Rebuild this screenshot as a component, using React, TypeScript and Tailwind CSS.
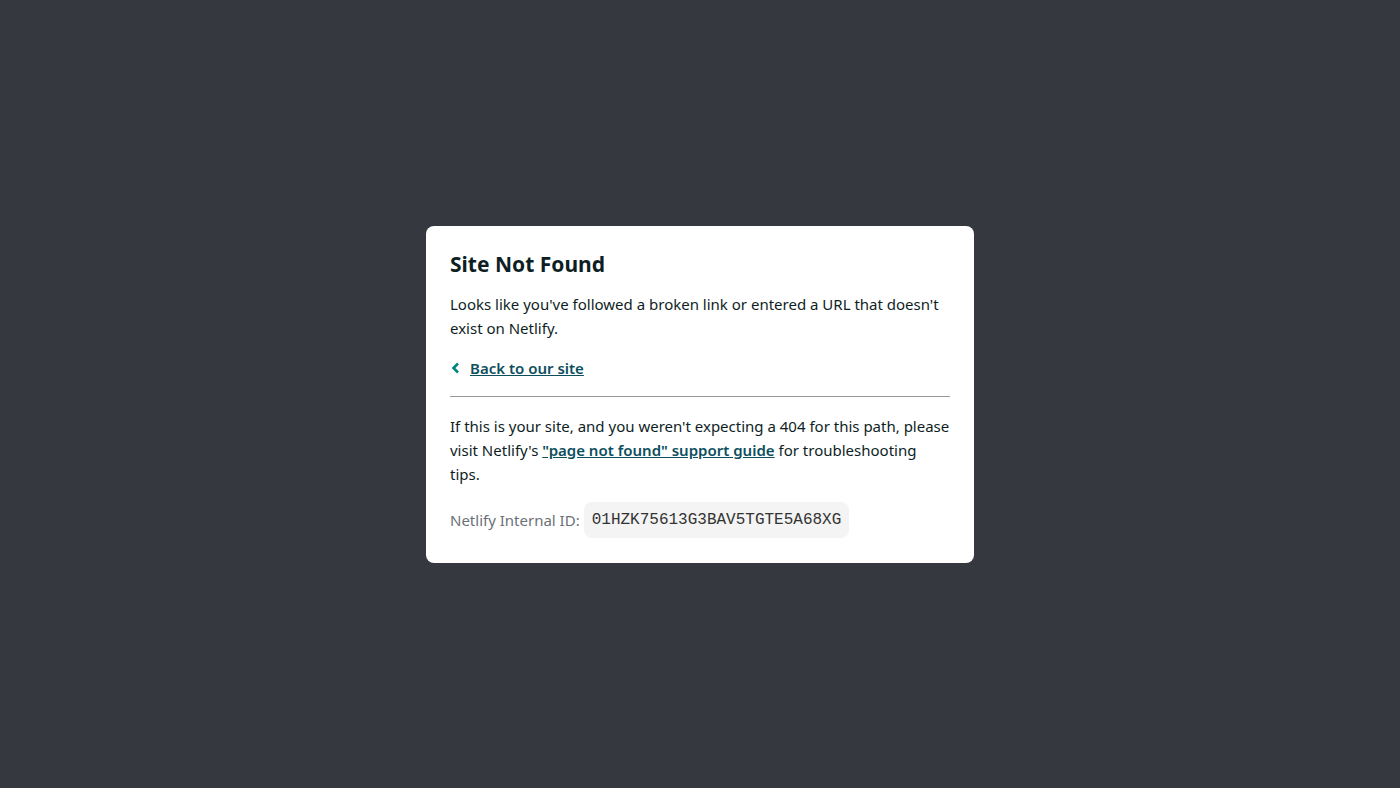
export default function App() {
  return (
    <div className="flex min-h-screen items-center justify-center bg-[#35383e] font-['Noto_Sans',sans-serif] text-[#0e1e25]">
      <div className="w-[548px] rounded-lg bg-white px-6 pt-6 pb-[25px] text-[15px] leading-6">
        <h1 className="mb-[14px] text-[21px] font-bold leading-7">Site Not Found</h1>
        <p>Looks like you've followed a broken link or entered a URL that doesn't exist on Netlify.</p>
        <p className="mt-4 flex items-center">
          <svg width="12" height="12" viewBox="0 0 12 12" className="mr-2 text-[#00857e]">
            <path d="M8 1.5 3.5 6 8 10.5" fill="none" stroke="currentColor" strokeWidth="2.6" />
          </svg>
          <a href="#" className="font-semibold text-[#0d4f5e] underline">
            Back to our site
          </a>
        </p>
        <hr className="mt-4 mb-[17px] border-t border-[#9a9a9a]" />
        <p>
          If this is your site, and you weren't expecting a 404 for this path, please visit Netlify's{" "}
          <a href="#" className="font-semibold text-[#0d4f5e] underline">
            "page not found" support guide
          </a>{" "}
          for troubleshooting tips.
        </p>
        <p className="mt-4 flex items-center text-[#6b7178]">
          Netlify Internal ID:
          <code className="ml-1 rounded-lg bg-[#f4f4f4] px-2 py-2 font-['Liberation_Mono',monospace] text-[16px] leading-5 text-[#333]">
            01HZK75613G3BAV5TGTE5A68XG
          </code>
        </p>
      </div>
    </div>
  );
}
